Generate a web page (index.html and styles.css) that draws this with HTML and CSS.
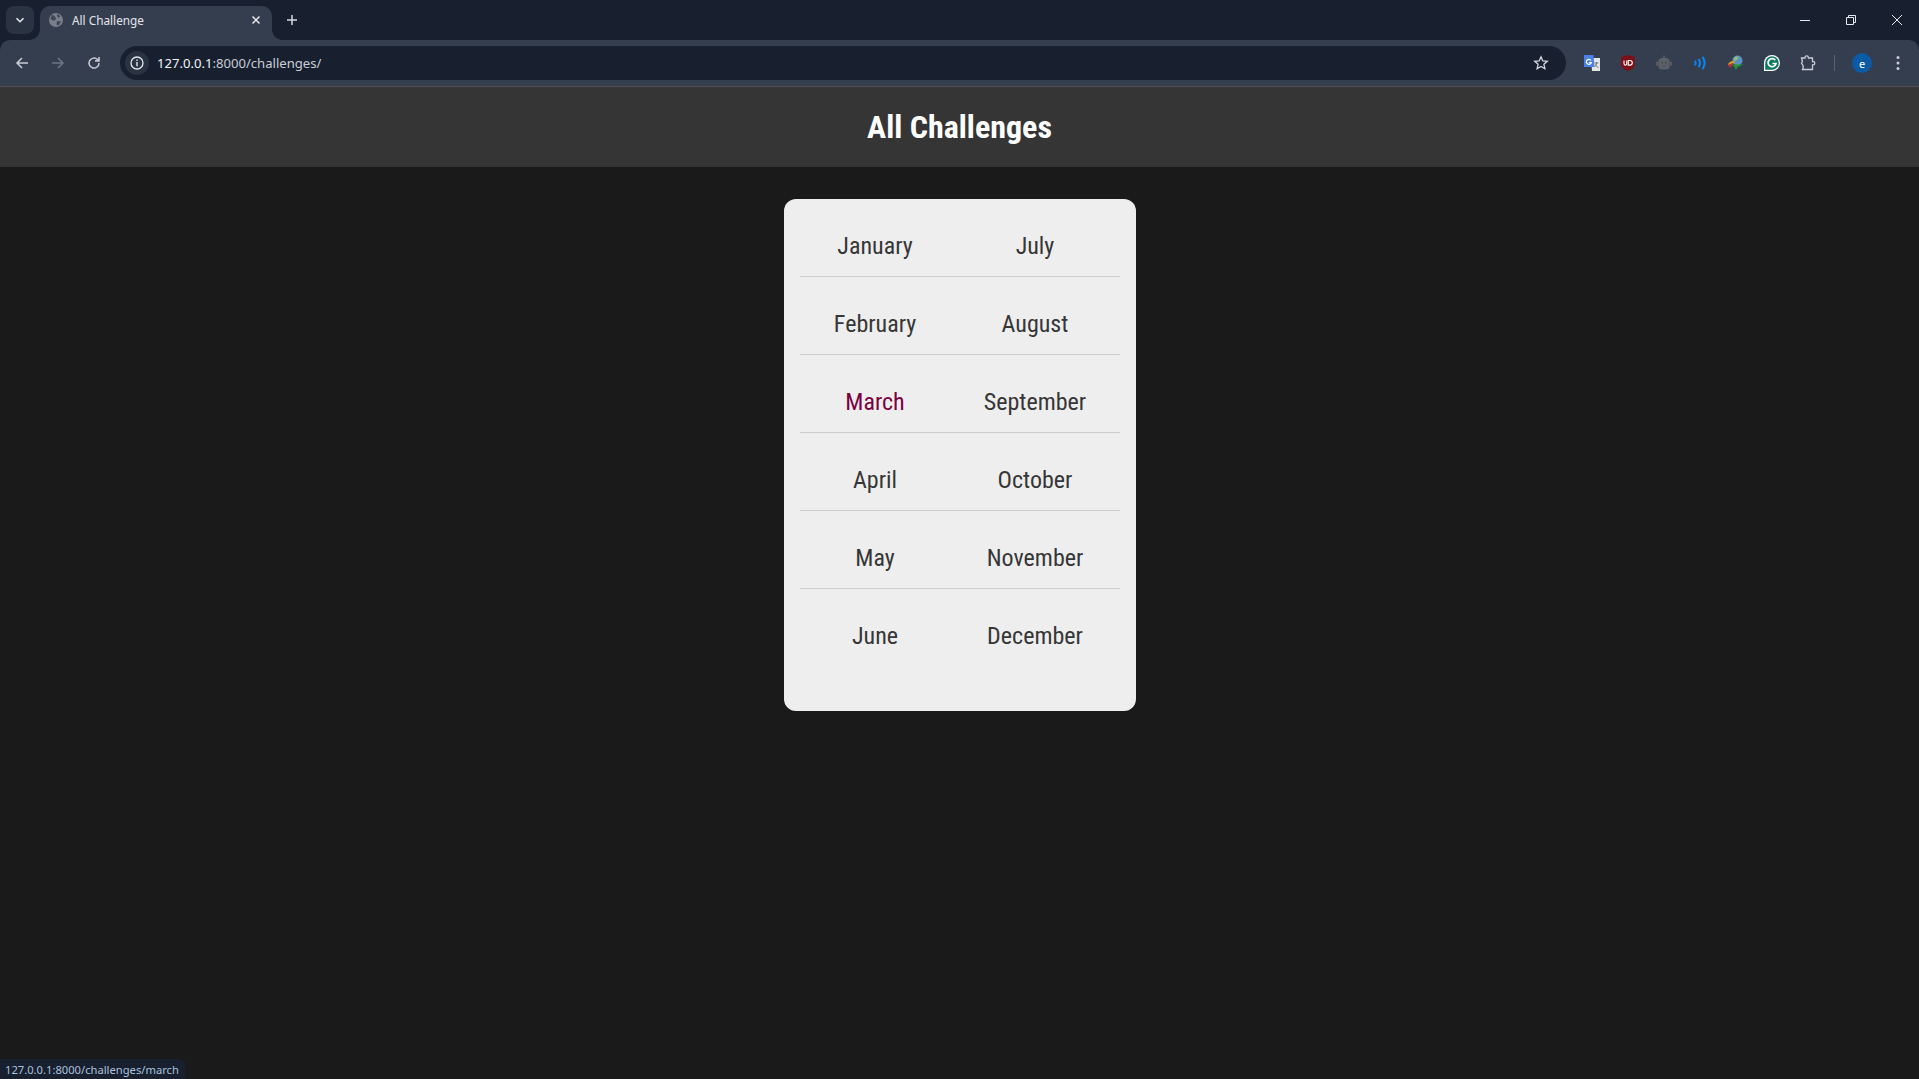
FILE: index.html
```html
<!DOCTYPE html>
<html lang="en">
<head>
<meta charset="utf-8">
<title>All Challenges</title>
<link rel="stylesheet" href="styles.css">
</head>
<body>
<div class="chrome">
  <div class="tabstrip">
    <div class="tabsearch"><svg width="12" height="12" viewBox="0 0 12 12"><path d="M2.500 4.200 6 7.700l3.500-3.500" fill="none" stroke="#e3e6ec" stroke-width="1.600"/></svg></div>
    <div class="tab">
      <svg class="favicon" width="14" height="14" viewBox="0 0 14 14"><circle cx="7" cy="7" r="7" fill="#7a7f88"/><path d="M3 1.500 6 3.500 7 6 5 8 1.500 6ZM8 8l4 .5-2.500 4L7.500 11.500ZM8.500 .8l3 2.500-2 1.500L8 3Z" fill="#3f4757"/></svg>
      <span class="tabtitle">All Challenge</span>
      <svg class="tabclose" width="10" height="10" viewBox="0 0 10 10"><path d="M1.500 1.500l7 7M8.500 1.500l-7 7" stroke="#e6e9ee" stroke-width="1.500"/></svg>
    </div>
    <svg class="newtab" width="12" height="12" viewBox="0 0 12 12"><path d="M6 1v10M1 6h10" stroke="#d5d9e0" stroke-width="1.500"/></svg>
    <div class="winctl">
      <svg width="12" height="12" viewBox="0 0 12 12"><path d="M1 6.500h10" stroke="#e6e9ee"/></svg>
      <svg width="12" height="12" viewBox="0 0 12 12"><path d="M1.500 3.500h7v7h-7zM3.500 3.500v-2h7v7h-2" fill="none" stroke="#e6e9ee"/></svg>
      <svg width="12" height="12" viewBox="0 0 12 12"><path d="M1 1l10 10M11 1 1 11" stroke="#e6e9ee"/></svg>
    </div>
  </div>
  <div class="toolbar">
    <svg class="navicon" width="16" height="16" viewBox="0 0 16 16"><path d="M14 8H3M8 3 3 8l5 5" fill="none" stroke="#c9cdd5" stroke-width="1.500"/></svg>
    <svg class="navicon" width="16" height="16" viewBox="0 0 16 16"><path d="M2 8h11M8 3l5 5-5 5" fill="none" stroke="#6d7482" stroke-width="1.500"/></svg>
    <svg class="navicon" width="16" height="16" viewBox="0 0 16 16"><path d="M13 8a5 5 0 1 1-1.500-3.500L13 6M13 2v4H9" fill="none" stroke="#c9cdd5" stroke-width="1.500"/></svg>
    <div class="omnibox">
      <div class="siteinfo"><svg width="16" height="16" viewBox="0 0 16 16"><circle cx="8" cy="8" r="6" fill="none" stroke="#e3e6ec" stroke-width="1.300"/><path d="M8 7v4.200M8 4.600v1.300" stroke="#e3e6ec" stroke-width="1.400"/></svg></div>
      <span class="url">127.0.0.1<span class="urlpath">:8000/challenges/</span></span>
      <svg class="star" width="16" height="16" viewBox="0 0 16 16"><path d="M8 1.800l1.800 4.100 4.500.4-3.400 3 1 4.400L8 11.400l-3.900 2.300 1-4.400-3.400-3 4.500-.4Z" fill="none" stroke="#d5d9e0" stroke-width="1.300"/></svg>
    </div>
    <div class="exts">
      <svg width="16" height="16" viewBox="0 0 16 16"><path d="M7 3h9v13H8Z" fill="#e4e6ea"/><path d="M0 0h9.500l1 12H0Z" fill="#4a80e8"/><path d="M7 5.500A2.500 2.500 0 1 0 7.300 7.500H5" fill="none" stroke="#fff" stroke-width="1.200"/><path d="M10.500 8h4M12.500 7v1c0 2-1 3-2 4M11.500 9.500c.5 1.500 1.500 2.500 3 3" stroke="#777" fill="none"/></svg>
      <svg width="16" height="16" viewBox="0 0 16 16"><path d="M8 0l7 2v7c0 3-3 5.500-7 7C4 14.500 1 12 1 9V2Z" fill="#7d1017"/><path d="M4 5.500v3.200a1.400 1.400 0 0 0 2.800 0V5.500M8.300 5.500v4.600H10a2.300 2.300 0 0 0 0-4.600Z" fill="none" stroke="#fff" stroke-width="1.100"/></svg>
      <svg width="16" height="16" viewBox="0 0 16 16"><path d="M8 .5v3" stroke="#5d6068" stroke-width="1.400"/><rect x="2.500" y="3" width="11" height="11.500" rx="3.500" fill="#5d6068"/><rect x=".2" y="6.500" width="2" height="4.500" rx="1" fill="#5d6068"/><rect x="13.800" y="6.500" width="2" height="4.500" rx="1" fill="#5d6068"/><circle cx="6" cy="7.800" r="1" fill="#464a51"/><circle cx="10" cy="7.800" r="1" fill="#464a51"/><path d="M6 11h4" stroke="#464a51"/></svg>
      <svg width="16" height="16" viewBox="0 0 16 16"><path d="M2.800 5.800a3.500 3.500 0 0 1 0 4.400M6.500 3.800a7 7 0 0 1 0 8.400M10.500 1.800a11 11 0 0 1 0 12.400" fill="none" stroke="#0a84f0" stroke-width="2.100"/></svg>
      <svg width="16" height="16" viewBox="0 0 16 16"><circle cx="9.500" cy="5.500" r="5" fill="#5c91c4"/><path d="M5.500 3.500a4 4 0 0 1 5-1.500L9 5 6 6Z" fill="#8fbe7c"/><path d="M0 9.500a6 5 0 0 1 6-3.500l1 2-3 .5-2.500 2Z" fill="#e0a020"/><path d="M.2 11a4 3 0 0 1 3-2.500l2 1L2.500 12.500Z" fill="#c02a3a"/><path d="M4 9.500h12l-6.500 2.500-1.500 3-1.500-3Z" fill="#1f9a33"/></svg>
      <svg width="16" height="16" viewBox="0 0 16 16"><path d="M8 0a8 8 0 1 1 0 16H0V8A8 8 0 0 1 8 0Z" fill="#fff"/><path d="M8 1.200A6.800 6.800 0 1 1 8 14.800H1.200V8A6.800 6.800 0 0 1 8 1.200Z" fill="#0b7a5d"/><path d="M11.300 5.300a4 4 0 1 0 .7 3.200H8.500" fill="none" stroke="#fff" stroke-width="1.700"/></svg>
      <svg width="16" height="16" viewBox="0 0 16 16"><path d="M1.500 3h3.500V2.500a1.700 1.700 0 0 1 3.400 0V3h4.100v3.500h.6a1.700 1.700 0 0 1 0 3.400h-.6v4.600H2.500L3.300 12 3 10.500 1.500 8 2.500 6.500Z" fill="none" stroke="#c9cdd5" stroke-width="1.300"/></svg>
    </div>
    <div class="sep"></div>
    <div class="avatar">e</div>
    <svg class="kebab" width="4" height="16" viewBox="0 0 4 16"><circle cx="2" cy="2.500" r="1.500" fill="#c9cdd5"/><circle cx="2" cy="8" r="1.500" fill="#c9cdd5"/><circle cx="2" cy="13.500" r="1.500" fill="#c9cdd5"/></svg>
  </div>
</div>
<header class="pagehead"><h1>All Challenges</h1></header>
<main class="page">
  <ul class="months">
    <li><a href="#">January</a></li><li><a href="#">July</a></li>
    <li><a href="#">February</a></li><li><a href="#">August</a></li>
    <li><a href="#" class="hover">March</a></li><li><a href="#">September</a></li>
    <li><a href="#">April</a></li><li><a href="#">October</a></li>
    <li><a href="#">May</a></li><li><a href="#">November</a></li>
    <li class="last"><a href="#">June</a></li><li class="last"><a href="#">December</a></li>
  </ul>
</main>
<div class="statusbar">127.0.0.1:8000/challenges/march</div>
</body>
</html>
```
FILE: styles.css
```css
* { box-sizing: border-box; }
html, body { margin: 0; height: 100%; }
body {
  background: #1a1a1a;
  font-family: "Roboto", "Liberation Sans", sans-serif;
  display: flex;
  flex-direction: column;
  overflow: hidden;
}
.chrome { height: 87px; background: #18202f; flex: none; font-family: "Noto Sans", "Open Sans", sans-serif; }
.tabstrip { height: 40px; display: flex; align-items: center; position: relative; }
.tabsearch { width: 28px; height: 28px; margin-left: 6px; border-radius: 8px; background: #2a3342; display: flex; align-items: center; justify-content: center; }
.tab { position: relative; width: 232px; height: 34px; margin: 6px 0 0 6px; border-radius: 10px 10px 0 0; background: #353e4e; display: flex; align-items: center; padding: 0 11px 6px 9px; }
.tab::before, .tab::after { content: ""; position: absolute; bottom: 0; width: 10px; height: 10px; }
.tab::before { left: -10px; background: radial-gradient(circle at 0 0, transparent 9.500px, #353e4e 10px); }
.tab::after { right: -10px; background: radial-gradient(circle at 100% 0, transparent 9.500px, #353e4e 10px); }
.favicon { flex: none; }
.tabtitle { margin-left: 9px; flex: 1; font-size: 11.800px; color: #e3e6ec; }
.tabclose { flex: none; }
.newtab { margin-left: 14px; }
.winctl { margin-left: auto; display: flex; gap: 34px; padding-right: 16px; }
.toolbar { height: 47px; background: #353e4e; border-radius: 10px 10px 0 0; border-bottom: 1px solid #4a4d55; display: flex; align-items: center; padding: 0 0 0 14px; }
.navicon { flex: none; margin-right: 20px; }
.omnibox { flex: none; width: 1446px; height: 34px; margin-left: -2px; border-radius: 17px; background: #18202f; display: flex; align-items: center; padding: 0 17px 0 5px; }
.siteinfo { width: 24px; height: 24px; border-radius: 12px; background: #2a3342; display: flex; align-items: center; justify-content: center; }
.url { margin-left: 8px; flex: 1; font-size: 13.100px; color: #f1f3f6; }
.urlpath { color: #c9cdd5; }
.star { flex: none; }
.exts { display: flex; align-items: center; gap: 20px; margin-left: 18px; }
.exts svg { flex: none; }
.sep { width: 1px; height: 16px; background: #5c6370; margin-left: 18px; }
.avatar { width: 20px; height: 20px; margin-left: 17px; border-radius: 50%; background: #0b5aa6; color: #fff; font-size: 11px; display: flex; align-items: center; justify-content: center; }
.kebab { margin-left: 24px; flex: none; }
.pagehead { height: 80px; flex: none; background: #353535; display: flex; justify-content: center; align-items: center; }
.pagehead h1 { margin: 0; color: #fff; font-size: 32px; font-weight: 700; font-stretch: 75%; font-family: "Roboto", sans-serif; }
.page { flex: 1; padding-top: 32px; }
.months {
  width: 352px; margin: 0 auto; padding: 0 16px 44px;
  list-style: none; background: #eee; border-radius: 12px;
  display: grid; grid-template-columns: 160px 160px; grid-auto-rows: 78px;
}
.months li { border-bottom: 1px solid #ccc; padding: 32px 9px 0 0; text-align: center; line-height: 30px; font-size: 24px; font-weight: 385; font-stretch: 75%; }
.months li.last { border-bottom: 0; }
.months a { color: #363636; text-decoration: none; }
.months a.hover { color: #7a0040; }
.statusbar { position: fixed; left: 0; bottom: 0; height: 20px; width: 185px; padding: 1px 0 0 5px; background: #18202f; border-radius: 0 6px 0 0; font-family: "Noto Sans", sans-serif; font-size: 11.200px; line-height: 20px; color: #a9c0dc; }
```
